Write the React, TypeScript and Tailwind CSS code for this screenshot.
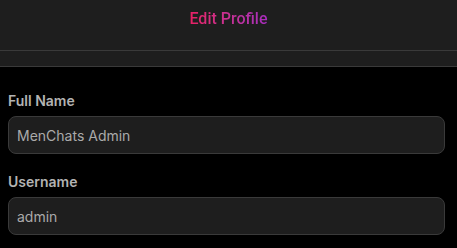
export default function App() {
  return (
    <div className="min-h-screen bg-black" style={{ fontFamily: 'Inter, sans-serif' }}>
      <header className="bg-[#1e1e1e]">
        <div className="h-[51px] border-b border-[#3a3a3a] flex justify-center pt-[9px]">
          <h1
            className="text-[16px] leading-[20px] font-medium bg-gradient-to-r from-[#e91e63] to-[#a62bbd] bg-clip-text text-transparent h-fit"
            style={{ fontFamily: 'Roboto, sans-serif' }}
          >
            Edit Profile
          </h1>
        </div>
        <div className="h-[16px] border-b border-[#3a3a3a]"></div>
      </header>

      <form className="pl-2 pr-3 pt-6 flex flex-col gap-[18px]">
        {[
          { label: 'Full Name', value: 'MenChats Admin' },
          { label: 'Username', value: 'admin' },
        ].map((f) => (
          <div key={f.label} className="flex flex-col gap-[5px]">
            <label className="text-sm leading-5 font-semibold text-[#b3b3b3]">{f.label}</label>
            <input
              defaultValue={f.value}
              className="h-[38px] w-full rounded-lg border border-[#3a3a3a] bg-[#1e1e1e] px-2 text-sm text-[#aaaaaa] outline-none"
            />
          </div>
        ))}
      </form>
    </div>
  );
}
